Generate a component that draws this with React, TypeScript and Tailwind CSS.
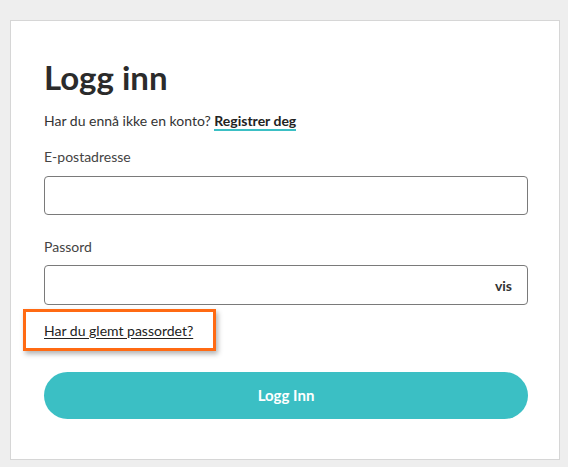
export default function App() {
  return (
    <div className="min-h-screen bg-[#eeeeee] pl-[10px] pr-[8px] pt-[20px] pb-2 font-['Lato',sans-serif] text-[#333]">
      <div className="border border-[#d6d6d6] bg-white pl-[33px] pr-[31px] pt-[36px] pb-[40px]">
        <h1 className="text-[33px] font-bold leading-[40px] text-[#2b2b2b]">Logg inn</h1>
        <p className="mt-[15px] text-[14px] leading-[18px] text-[#333]">
          Har du ennå ikke en konto?{" "}
          <a className="border-b-2 border-[#3bbfc4] font-bold text-[#222]">Registrer deg</a>
        </p>

        <label className="mt-[18px] block text-[14px] leading-[18px] text-[#444]">E-postadresse</label>
        <div className="mt-[10px] h-[39px] rounded-[4px] border border-[#7a7a7a]" />

        <label className="mt-[23px] block text-[14px] leading-[18px] text-[#444]">Passord</label>
        <div className="mt-[9px] flex h-[40px] items-center justify-end rounded-[4px] border border-[#7a7a7a] pr-[15px]">
          <span className="text-[14px] font-bold text-[#333]">vis</span>
        </div>

        <div className="-ml-[21px] mt-[4px] inline-flex h-[42px] w-[193px] items-center border-[3px] border-[#ff6a13] pl-[18px] shadow-[2px_3px_5px_rgba(0,0,0,0.3)]">
          <a className="text-[14px] text-[#222] underline underline-offset-2">Har du glemt passordet?</a>
        </div>

        <button className="mt-[21px] flex h-[47px] w-full items-center justify-center rounded-full bg-[#3bbfc4] text-[15px] font-bold text-white">
          Logg Inn
        </button>
      </div>
    </div>
  );
}
